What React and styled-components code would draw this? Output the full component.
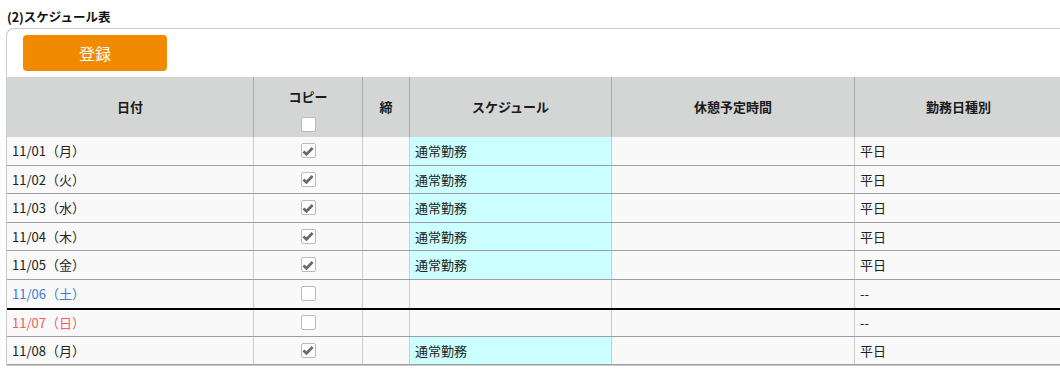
import React from 'react';
import styled, { createGlobalStyle } from 'styled-components';

/* 勤務スケジュール表 - 一覧画面 */

const GlobalStyle = createGlobalStyle`
  html, body {
    margin: 0;
    padding: 0;
    overflow: hidden;
    background: #fff;
  }
  body {
    font-family: "Noto Sans CJK JP", "Noto Sans", sans-serif;
    color: #222;
  }
`

const COLS = '247px 109px 47px 202px 243px 1fr';

const Title = styled.h2`
  margin: 0 0 2px;
  padding: 8px 0 0 7px;
  font-size: 12.5px;
  line-height: 18px;
  font-weight: bold;
  color: #111;
`
const Panel = styled.section`
  margin-left: 6px;
  width: 1055px;
  border: 1px solid #ccc;
  border-right: none;
  border-radius: 8px 0 0 0;
  background: #fff;
`
const Toolbar = styled.div`
  padding: 6px 16px 6px;
`
const Button = styled.button`
  width: 144px;
  height: 36px;
  border: none;
  border-radius: 4px;
  background: #f28a00;
  color: #fff;
  font-family: inherit;
  font-size: 16px;
  cursor: pointer;
`
const Table = styled.div`
  width: 100%;
`
const HeadRow = styled.div`
  display: grid;
  grid-template-columns: ${COLS};
  height: 60px;
  background: #d4d5d5;
`
const HeadCell = styled.div`
  display: flex;
  flex-direction: column;
  align-items: center;
  justify-content: center;
  gap: 11px;
  padding-top: ${p => (p.$stack ? '6px' : '0')};
  border-right: 1px solid #aaa;
  font-size: 13px;
  line-height: 18px;
  font-weight: bold;
  color: #1a1a1a;
  &:last-child {
    border-right: none;
  }
`
const Row = styled.div`
  display: grid;
  grid-template-columns: ${COLS};
  height: 28.5px;
  box-sizing: border-box;
  background: #f9f9f9;
  border-top: ${p => (p.$weekStart ? '2px solid #000' : 'none')};
  border-bottom: ${p => (p.$noLine ? 'none' : '1px solid #9d9d9d')};
`
const Cell = styled.div`
  display: flex;
  align-items: center;
  justify-content: ${p => (p.$center ? 'center' : 'flex-start')};
  padding: 0 5px;
  border-right: 1px solid #ccc;
  font-size: 13px;
  background: ${p => (p.$fill ? '#ccffff' : 'transparent')};
  color: ${p => p.$color || '#222'};
  &:last-child {
    border-right: none;
  }
`
const Box = styled.span`
  display: inline-flex;
  align-items: center;
  justify-content: center;
  width: 15px;
  height: 15px;
  box-sizing: border-box;
  border: 1px solid #bbb;
  border-radius: 2px;
  background: #fff;
`

const Check = ({ checked }) => (
  <Box>
    {checked && (
      <svg width="12" height="12" viewBox="0 0 12 12">
        <path d="M1.4 6.4 L4.5 9.3 L10.6 3" fill="none" stroke="#6b6b6b" strokeWidth="2.7" strokeLinejoin="miter" strokeLinecap="butt" />
      </svg>
    )}
  </Box>
);

const rows = [
  { date: '11/01（月）', work: true },
  { date: '11/02（火）', work: true },
  { date: '11/03（水）', work: true },
  { date: '11/04（木）', work: true },
  { date: '11/05（金）', work: true },
  { date: '11/06（土）', work: false, color: '#3e7bd6', noLine: true },
  { date: '11/07（日）', work: false, color: '#f45b5b', weekStart: true },
  { date: '11/08（月）', work: true },
];

export default function App() {
  return (
    <>
      <GlobalStyle />
      <Title>(2)スケジュール表</Title>
      <Panel>
        <Toolbar>
          <Button>登録</Button>
        </Toolbar>
        <Table>
          <HeadRow>
            <HeadCell>日付</HeadCell>
            <HeadCell $stack>
              <span>コピー</span>
              <Check />
            </HeadCell>
            <HeadCell>締</HeadCell>
            <HeadCell>スケジュール</HeadCell>
            <HeadCell>休憩予定時間</HeadCell>
            <HeadCell>勤務日種別</HeadCell>
          </HeadRow>
          {rows.map(r => (
            <Row key={r.date} $noLine={r.noLine} $weekStart={r.weekStart}>
              <Cell $color={r.color}>{r.date}</Cell>
              <Cell $center><Check checked={r.work} /></Cell>
              <Cell />
              <Cell $fill={r.work}>{r.work ? '通常勤務' : ''}</Cell>
              <Cell />
              <Cell>{r.work ? '平日' : '--'}</Cell>
            </Row>
          ))}
        </Table>
      </Panel>
    </>
  );
}
